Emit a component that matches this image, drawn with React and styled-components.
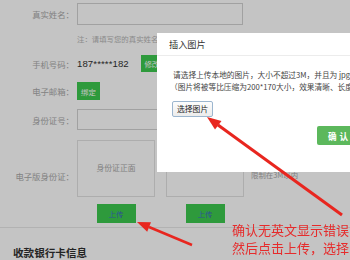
import React from 'react';
import styled, { createGlobalStyle } from 'styled-components';

const GlobalStyle = createGlobalStyle`
  html, body {
    margin: 0;
    padding: 0;
    background: #fff;
    overflow: hidden;
    font-family: 'Noto Sans CJK SC', 'Noto Sans', sans-serif;
  }
`;

const Page = styled.div`
  width: 350px;
  height: 260px;
  padding-top: 3px;
  box-sizing: border-box;
  background: #fff;
`;

const FormRow = styled.div`
  display: grid;
  grid-template-columns: 77px 1fr;
  align-items: ${({ align }) => align || 'center'};
  height: ${({ height }) => height}px;
  margin-top: ${({ gap }) => gap || 0}px;
`;

const Label = styled.span`
  padding-right: 3px;
  padding-bottom: ${({ bottom }) => bottom || 0}px;
  text-align: right;
  font-size: 8.4px;
  line-height: 10px;
  color: #aaa;
  white-space: nowrap;
`;

const TextInput = styled.div`
  width: ${({ width }) => width}px;
  height: 100%;
  box-sizing: border-box;
  border: 1px solid #d2d2d2;
  background: #fff;
`;

const Note = styled.span`
  font-size: 7.4px;
  line-height: 12px;
  color: #b4b4b4;
  white-space: nowrap;
`;

const Inline = styled.div`
  display: flex;
  align-items: center;
  gap: ${({ gap }) => gap || 0}px;
  height: 100%;
`;

const Phone = styled.span`
  font-family: 'Liberation Sans', 'Noto Sans CJK SC', sans-serif;
  font-size: 9.6px;
  color: #303030;
  letter-spacing: 0.1px;
`;

const GreenButton = styled.span`
  display: inline-flex;
  align-items: center;
  justify-content: center;
  width: ${({ width }) => width}px;
  height: ${({ height }) => height}px;
  background: #3dc94f;
  color: ${({ textColor }) => textColor || '#fff'};
  font-size: 7.4px;
`;

const CardRow = styled.div`
  display: flex;
  align-items: flex-end;
  gap: 11px;
  height: 100%;
`;

const CardBox = styled.div`
  width: 78px;
  height: 100%;
  box-sizing: border-box;
  border: 1px solid #e2e2e2;
  display: flex;
  align-items: flex-end;
  justify-content: center;
  padding-bottom: 23px;
  font-size: 7.8px;
  color: #a8a8a8;
`;

const Hint = styled.span`
  margin-left: -4px;
  padding-bottom: 17px;
  font-size: 7.4px;
  color: #a8a8a8;
  white-space: nowrap;
`;

const UploadRow = styled.div`
  display: flex;
  gap: 11px;
  height: 100%;
`;

const UploadCell = styled.div`
  width: 78px;
  display: flex;
  justify-content: center;
`;

const Divider = styled.div`
  margin-top: 4px;
  border-top: 1px solid #e8e8e8;
`;

const SectionTitle = styled.h3`
  margin: 19px 0 0 13px;
  font-size: 10.6px;
  line-height: 12px;
  font-weight: bold;
  color: #303030;
`;

const Mask = styled.div`
  position: fixed;
  inset: 0;
  background: rgba(0, 0, 0, 0.23);
`;

const Modal = styled.div`
  position: fixed;
  left: 157px;
  top: 33px;
  width: 230px;
  height: 139px;
  background: #fff;
  display: flex;
  flex-direction: column;
`;

const ModalHeader = styled.div`
  height: 23px;
  box-sizing: border-box;
  border-bottom: 1px solid #ececec;
  display: flex;
  align-items: center;
  padding-left: 12px;
  font-size: 9.2px;
  color: #333;
`;

const ModalBody = styled.div`
  padding: 13px 0 0 16px;
`;

const Line = styled.p`
  margin: 0;
  font-size: 7.7px;
  line-height: 12px;
  color: #444;
  white-space: nowrap;
  margin-left: ${({ indent }) => indent || 0}px;
`;

const PickButton = styled.button`
  margin-top: 7px;
  margin-left: -1px;
  height: 16px;
  padding: 0 4px;
  border: 1px solid #9cb6cf;
  border-radius: 2px;
  background: linear-gradient(#fdfdfd, #ececec);
  font-family: inherit;
  font-size: 7.8px;
  color: #222;
`;

const ModalFooter = styled.div`
  display: flex;
  justify-content: flex-end;
  padding: 9px 12px 0 0;
`;

const ConfirmButton = styled.button`
  width: 58px;
  height: 19px;
  padding: 0 0 0 11px;
  border: none;
  border-radius: 2px;
  background: #5cb85c;
  color: #fff;
  font-family: inherit;
  font-size: 8.6px;
  font-weight: bold;
  text-align: left;
  letter-spacing: 3px;
`;

const Annotation = styled.div`
  position: fixed;
  left: 232px;
  top: 221px;
  font-size: 13px;
  line-height: 17.5px;
  color: #e62b2b;
  white-space: nowrap;
`;

const Arrows = styled.svg`
  position: fixed;
  inset: 0;
  pointer-events: none;
`;

export default function App() {
  return (
    <>
      <GlobalStyle />
      <Page>
        <FormRow height={22}>
          <Label>真实姓名：</Label>
          <TextInput width={166} />
        </FormRow>
        <FormRow height={12} gap={8}>
          <span />
          <Note>注：请填写您的真实姓名</Note>
        </FormRow>
        <FormRow height={17} gap={10}>
          <Label>手机号码：</Label>
          <Inline gap={12}>
            <Phone>187*****182</Phone>
            <GreenButton width={22} height={17}>修改</GreenButton>
          </Inline>
        </FormRow>
        <FormRow height={18} gap={10}>
          <Label>电子邮箱：</Label>
          <Inline>
            <GreenButton width={23} height={18}>绑定</GreenButton>
          </Inline>
        </FormRow>
        <FormRow height={21} gap={9}>
          <Label>身份证号：</Label>
          <TextInput width={166} />
        </FormRow>
        <FormRow height={57} gap={10} align="end">
          <Label bottom={16}>电子版身份证：</Label>
          <CardRow>
            <CardBox>身份证正面</CardBox>
            <CardBox />
            <Hint>限制在3M以内</Hint>
          </CardRow>
        </FormRow>
        <FormRow height={19} gap={7}>
          <span />
          <UploadRow>
            <UploadCell>
              <GreenButton width={39} height={19} textColor="#3a6cc0">上传</GreenButton>
            </UploadCell>
            <UploadCell>
              <GreenButton width={39} height={19} textColor="#3a6cc0">上传</GreenButton>
            </UploadCell>
          </UploadRow>
        </FormRow>
        <Divider />
        <SectionTitle>收款银行卡信息</SectionTitle>
      </Page>
      <Mask />
      <Modal>
        <ModalHeader>插入图片</ModalHeader>
        <ModalBody>
          <Line>请选择上传本地的图片，大小不超过3M，并且为 jpg</Line>
          <Line indent={-3}>（图片将被等比压缩为200*170大小，效果清晰、长度</Line>
          <PickButton>选择图片</PickButton>
        </ModalBody>
        <ModalFooter>
          <ConfirmButton>确认</ConfirmButton>
        </ModalFooter>
      </Modal>
      <Annotation>
        确认无英文显示错误
        <br />
        然后点击上传，选择
      </Annotation>
      <Arrows width="350" height="260" viewBox="0 0 350 260">
        <line x1="342" y1="215" x2="218" y2="125" stroke="#e8261f" strokeWidth="3" />
        <polygon points="207,117 221.5,121 215,129.5" fill="#e8261f" />
        <line x1="192" y1="245" x2="149" y2="227" stroke="#e8261f" strokeWidth="2.5" />
        <polygon points="137,222 151,222.2 147.2,231.8" fill="#e8261f" />
      </Arrows>
    </>
  );
}
